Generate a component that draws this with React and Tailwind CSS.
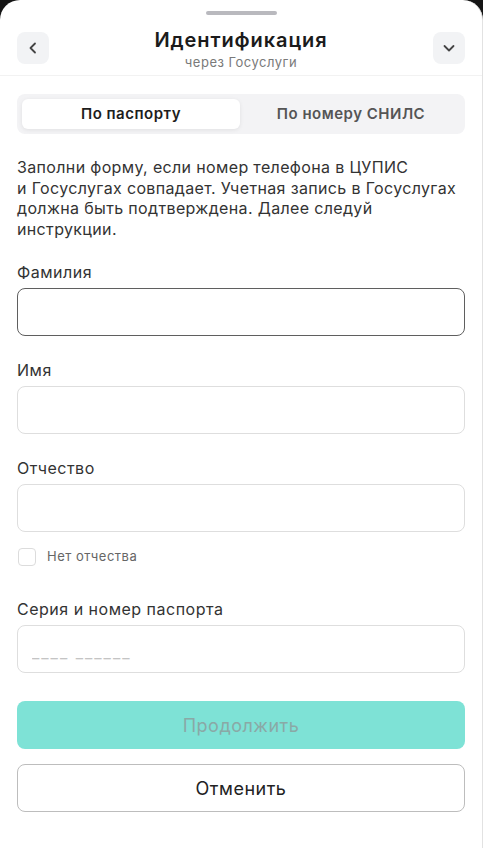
import { useState } from "react";

function Field({ label, value, onChange, focused, placeholder }) {
  return (
    <div className="flex flex-col">
      <label className="text-[16px] leading-[20px] text-[#333]">{label}</label>
      <input
        value={value}
        onChange={(e) => onChange(e.target.value)}
        placeholder={placeholder}
        className={`mt-[6px] h-[48px] w-full rounded-[8px] border bg-white px-[14px] pt-[6px] text-[16px] tracking-[2px] outline-none placeholder:text-[#c4c4c4] ${
          focused ? "border-[#5f5f5f]" : "border-[#dedede]"
        }`}
      />
    </div>
  );
}

export default function App() {
  const [tab, setTab] = useState("passport");
  const [lastName, setLastName] = useState("");
  const [firstName, setFirstName] = useState("");
  const [middleName, setMiddleName] = useState("");
  const [noMiddle, setNoMiddle] = useState(false);
  const [passport, setPassport] = useState("");

  return (
    <div
      className="min-h-[848px] bg-[#151515] tracking-[0.5px]"
      style={{ fontFamily: "Inter, 'Noto Sans', sans-serif" }}
    >
      <div className="min-h-[848px] rounded-t-[20px] border-r border-[#e2e2e2] bg-white">
        {/* drag handle */}
        <div className="flex justify-center pt-[11px]">
          <div className="h-[4px] w-[71px] rounded-full bg-[#b9b9be]" />
        </div>

        {/* header */}
        <div className="flex items-start justify-between border-b border-[#f2f2f2] px-[17px] pt-[12px] pb-[5px]">
          <button className="mt-[5px] flex h-[32px] w-[32px] items-center justify-center rounded-[8px] bg-[#f2f3f5]">
            <svg width="14" height="14" viewBox="0 0 14 14" fill="none" stroke="#444" strokeWidth="1.8" strokeLinecap="round" strokeLinejoin="round">
              <path d="M9 2.5 4.5 7 9 11.5" />
            </svg>
          </button>
          <div className="flex flex-col items-center">
            <h1 className="text-[20px] leading-[26px] font-semibold tracking-[0.9px] text-[#1b1b1b]">Идентификация</h1>
            <span className="mt-[1px] text-[13px] leading-[16px] text-[#7a7a7a]">через Госуслуги</span>
          </div>
          <button className="mt-[5px] flex h-[32px] w-[32px] items-center justify-center rounded-[8px] bg-[#f2f3f5]">
            <svg width="14" height="14" viewBox="0 0 14 14" fill="none" stroke="#444" strokeWidth="1.8" strokeLinecap="round" strokeLinejoin="round">
              <path d="M2.5 5 7 9.5 11.5 5" />
            </svg>
          </button>
        </div>

        <div className="px-[17px] pt-[18px] pb-[36px]">
          {/* tabs */}
          <div className="grid h-[40px] grid-cols-2 gap-[2px] rounded-[8px] bg-[#f3f3f5] p-[5px]">
            <button
              onClick={() => setTab("passport")}
              className={`rounded-[6px] text-[15px] font-semibold ${
                tab === "passport" ? "bg-white text-[#1d1d1d] shadow-[0_1px_4px_rgba(0,0,0,0.08)]" : "text-[#555]"
              }`}
            >
              По паспорту
            </button>
            <button
              onClick={() => setTab("snils")}
              className={`rounded-[6px] text-[15px] font-semibold ${
                tab === "snils" ? "bg-white text-[#1d1d1d] shadow-[0_1px_4px_rgba(0,0,0,0.08)]" : "text-[#555]"
              }`}
            >
              По номеру СНИЛС
            </button>
          </div>

          <p className="mt-[23px] text-[16px] leading-[20.7px] tracking-[0.35px] text-[#333]">
            Заполни форму, если номер телефона в ЦУПИС
            <br />и Госуслугах совпадает. Учетная запись в Госуслугах
            <br />должна быть подтверждена. Далее следуй
            <br />инструкции.
          </p>

          <div className="mt-[22px] flex flex-col gap-[24px]">
            <Field label="Фамилия" value={lastName} onChange={setLastName} focused />
            <Field label="Имя" value={firstName} onChange={setFirstName} />
            <div>
              <Field label="Отчество" value={middleName} onChange={setMiddleName} />
              <label className="mt-[15px] flex items-center gap-[11px]">
                <input
                  type="checkbox"
                  checked={noMiddle}
                  onChange={(e) => setNoMiddle(e.target.checked)}
                  className="ml-[1px] h-[18px] w-[18px] appearance-none rounded-[4px] border border-[#dcdcdc] bg-white"
                />
                <span className="text-[13px] text-[#666]">Нет отчества</span>
              </label>
            </div>
            <div className="mt-[9px]">
              <Field label="Серия и номер паспорта" value={passport} onChange={setPassport} placeholder="____ ______" />
            </div>
          </div>

          <button className="mt-[28px] h-[48px] w-full rounded-[8px] bg-[#7ee2d6] text-[18px] text-[#8aa9a6]">
            Продолжить
          </button>
          <button className="mt-[15px] h-[48px] w-full rounded-[8px] border border-[#bdbdbd] bg-white text-[18px] text-[#222]">
            Отменить
          </button>
        </div>
      </div>
    </div>
  );
}
